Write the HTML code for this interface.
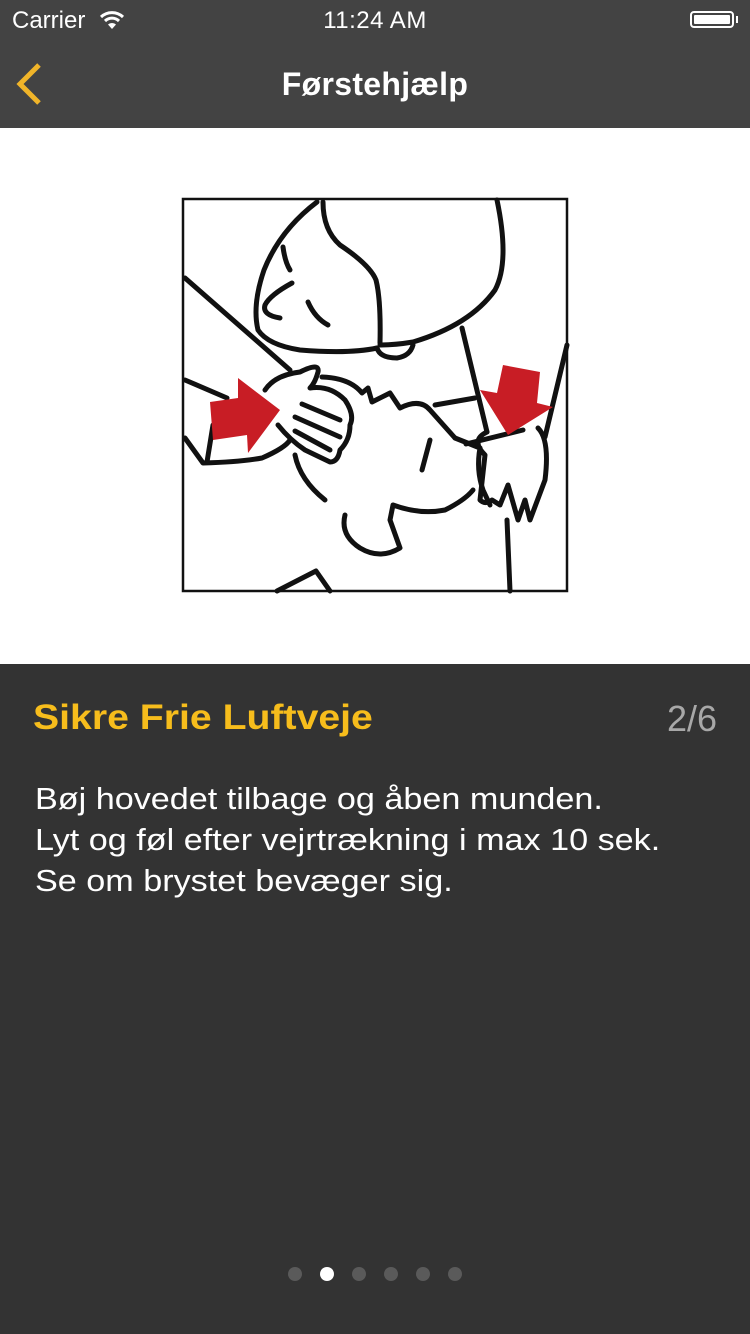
<!DOCTYPE html>
<html><head><meta charset="utf-8"><style>
html,body{margin:0;padding:0;}
body{width:750px;height:1334px;position:relative;overflow:hidden;background:#333;font-family:"Liberation Sans",sans-serif;}
.hdr{position:absolute;left:0;top:0;width:750px;height:128px;background:#434343;}
.sb{position:absolute;top:7px;color:#fff;font-size:24px;}
.navt{position:absolute;top:66px;width:750px;text-align:center;color:#fff;font-size:32px;font-weight:bold;letter-spacing:0.3px;}
.img{position:absolute;left:0;top:128px;width:750px;height:536px;background:#fff;}
.title{position:absolute;left:33px;top:698px;color:#f7bd1c;font-size:35px;font-weight:bold;transform:scaleX(1.12);transform-origin:0 0;white-space:nowrap;}
.cnt{position:absolute;right:33px;top:698px;color:#a8a8a8;font-size:36px;}
.body{position:absolute;left:35px;top:779px;color:#fff;font-size:30.5px;line-height:41px;transform:scaleX(1.12);transform-origin:0 0;white-space:nowrap;}
.dot{position:absolute;top:1267px;width:14px;height:14px;border-radius:50%;background:#5a5a5a;}
</style></head><body>
<div class="hdr">
  <div class="sb" style="left:12px">Carrier</div>
  <svg style="position:absolute;left:99px;top:9px" width="26" height="22" viewBox="0 0 26 22">
    <path d="M2 8 A16 16 0 0 1 24 8" stroke="#fff" stroke-width="3" fill="none"/>
    <path d="M6 12 A10 10 0 0 1 20 12" stroke="#fff" stroke-width="3" fill="none"/>
    <path d="M13 20 L9 15.5 A6 6 0 0 1 17 15.5 Z" fill="#fff"/>
  </svg>
  <div class="sb" style="left:0;width:750px;text-align:center;letter-spacing:0.5px">11:24 AM</div>
  <div style="position:absolute;left:690px;top:11px;width:44px;height:17px;border:2px solid #fff;border-radius:4px;box-sizing:border-box;padding:2px"><div style="background:#fff;width:100%;height:100%;border-radius:1px"></div></div>
  <div style="position:absolute;left:736px;top:16px;width:2px;height:7px;background:#fff"></div>
  <svg style="position:absolute;left:14px;top:62px" width="30" height="44" viewBox="0 0 30 44"><path d="M25 3 L6 22 L25 41" stroke="#f0b429" stroke-width="5" fill="none"/></svg>
  <div class="navt">Førstehjælp</div>
</div>
<div class="img">
<svg width="750" height="536" viewBox="0 128 750 536" style="position:absolute;left:0;top:0">
 <g fill="none" stroke="#111" stroke-width="5" stroke-linejoin="round" stroke-linecap="round">
  <path d="M185 278 L290 370"/>
  <path d="M185 380 L227 398"/>
  <path d="M185 438 L203 463 Q240 462 262 458 Q285 448 290 440"/>
  <path d="M213 425 L207 462"/>
  <path d="M317 202 Q280 230 264 270 Q252 305 258 330 Q268 345 300 350 Q350 354 377 348"/>
  <path d="M323 202 Q323 230 340 245 Q370 265 376 280 Q381 300 380 343"/>
  <path d="M497 200 Q510 262 495 290 Q470 325 413 342 Q395 345 380 345"/>
  <path d="M377 348 Q380 358 397 358 Q410 356 413 345"/>
  <path d="M283 247 Q285 262 290 270"/>
  <path d="M292 283 Q270 295 265 305 Q262 315 280 318"/>
  <path d="M308 302 Q315 318 328 325"/>
  <path d="M462 328 L487 432"/>
  <path d="M567 345 L545 437"/>
  <path d="M435 405 L475 398"/>
  <path d="M466 444 L523 430"/>
  <path d="M265 390 Q275 375 300 372 Q320 362 318 372 Q315 383 310 388 Q330 385 345 400 Q355 415 350 425 Q350 440 340 450 Q338 462 330 462 L305 450 Q290 440 278 425"/>
  <path d="M302 404 L340 420"/>
  <path d="M295 417 L340 437"/>
  <path d="M295 431 L330 450"/>
  <path d="M322 377 Q350 378 362 393 L368 388 L372 402 L390 393 L400 408 Q420 398 430 410 L455 438"/>
  <path d="M455 438 L480 448 Q476 470 483 490 L490 505"/>
  <path d="M295 455 Q300 480 325 500"/>
  <path d="M430 440 L422 470"/>
  <path d="M345 515 Q340 535 360 548 Q380 560 400 548 L390 520 L393 505 Q420 515 445 510 Q465 500 473 490"/>
  <path d="M487 432 Q470 440 485 455 L480 500 Q485 505 492 500 L500 505 L508 485 L518 520 L525 500 L530 520 L545 480 Q550 440 538 428"/>
  <path d="M277 591 L316 571 L330 591"/>
  <path d="M507 520 L510 591"/>
 </g>
 <polygon fill="#c81d25" points="210,402 238,398 238,378 280,410 248,453 247,435 213,440"/>
 <polygon fill="#c81d25" points="503,365 540,372 537,403 553,407 508,435 480,390 497,393"/>
 <rect x="183" y="199" width="384" height="392" fill="none" stroke="#111" stroke-width="2.5"/>
</svg>
</div>
<div class="title">Sikre Frie Luftveje</div>
<div class="cnt">2/6</div>
<div class="body">Bøj hovedet tilbage og åben munden.<br>Lyt og føl efter vejrtrækning i max 10 sek.<br>Se om brystet bevæger sig.</div>
<div class="dot" style="left:288px"></div>
<div class="dot" style="left:320px;background:#fff"></div>
<div class="dot" style="left:352px"></div>
<div class="dot" style="left:384px"></div>
<div class="dot" style="left:416px"></div>
<div class="dot" style="left:448px"></div>
</body></html>
